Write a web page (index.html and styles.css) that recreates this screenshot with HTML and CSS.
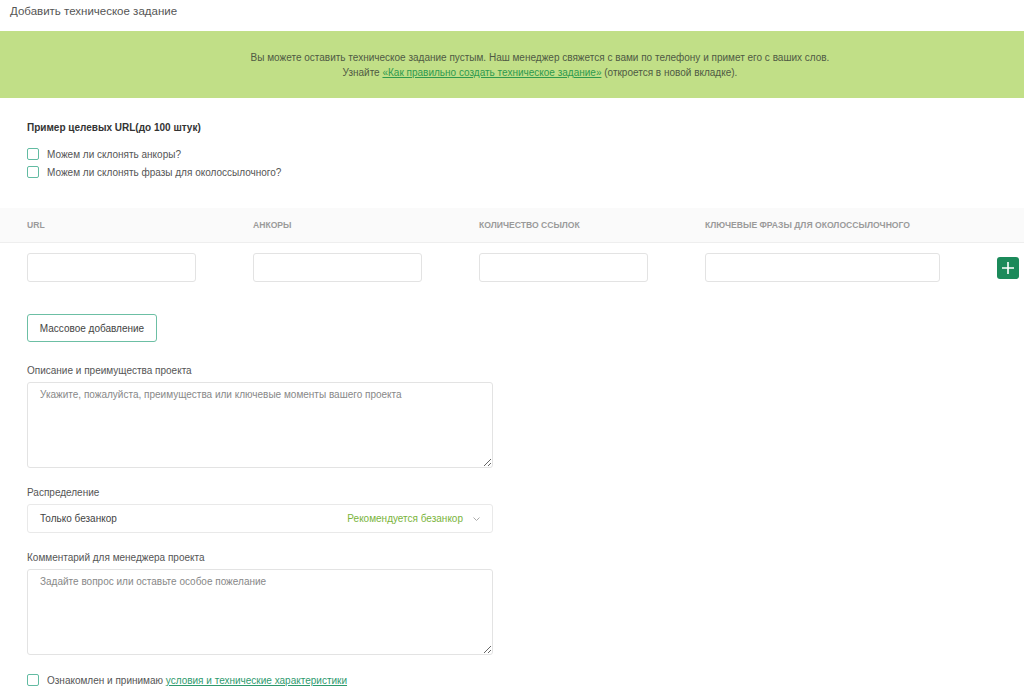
FILE: index.html
```html
<!DOCTYPE html>
<html lang="ru">

<head>
    <meta charset="UTF-8">
    <meta name="viewport" content="width=device-width, initial-scale=1.0">
    <title>Добавить техническое задание</title>
    <link rel="stylesheet" href="styles.css">
</head>

<body>
    <h1 class="title">Добавить техническое задание</h1>

    <div class="notice">
        <p>Вы можете оставить техническое задание пустым. Наш менеджер свяжется с вами по телефону и примет его с ваших слов.</p>
        <p>Узнайте <a href="#">«Как правильно создать техническое задание»</a> (откроется в новой вкладке).</p>
    </div>

    <div class="section">
        <div class="section-title">Пример целевых URL(до 100 штук)</div>
        <label class="check"><span class="box"></span>Можем ли склонять анкоры?</label>
        <label class="check"><span class="box"></span>Можем ли склонять фразы для околоссылочного?</label>
    </div>

    <div class="urls">
        <div class="urls-head">
            <div class="col">URL</div>
            <div class="col">Анкоры</div>
            <div class="col">Количество ссылок</div>
            <div class="col wide">Ключевые фразы для околоссылочного</div>
        </div>
        <div class="urls-row">
            <div class="col"><input type="text" class="field"></div>
            <div class="col"><input type="text" class="field"></div>
            <div class="col"><input type="text" class="field"></div>
            <div class="col wide"><input type="text" class="field"></div>
            <button class="add" type="button">
                <svg width="12" height="12" viewBox="0 0 12 12"><path d="M6 0v12M0 6h12" stroke="#fff" stroke-width="1.6"/></svg>
            </button>
        </div>
    </div>

    <div class="form">
        <button class="mass" type="button">Массовое добавление</button>

        <div class="group first">
            <div class="label">Описание и преимущества проекта</div>
            <textarea class="area" placeholder="Укажите, пожалуйста, преимущества или ключевые моменты вашего проекта"></textarea>
        </div>

        <div class="group">
            <div class="label">Распределение</div>
            <div class="select">
                <span>Только безанкор</span>
                <span class="hint">Рекомендуется безанкор</span>
                <svg class="arrow" width="7" height="4" viewBox="0 0 7 4"><path d="M0.5 0.5l3 3 3-3" fill="none" stroke="#aaa" stroke-width="1"/></svg>
            </div>
        </div>

        <div class="group">
            <div class="label">Комментарий для менеджера проекта</div>
            <textarea class="area" placeholder="Задайте вопрос или оставьте особое пожелание"></textarea>
        </div>

        <label class="check agree"><span class="box"></span>Ознакомлен и принимаю&nbsp;<a href="#">условия и технические характеристики</a></label>
    </div>
</body>

</html>
```

FILE: styles.css
```css
body {
    margin: 0;
    font-family: "Liberation Sans", Arial, sans-serif;
    font-size: 10px;
    color: #555;
    background: #fff;
}

.title {
    margin: 0;
    padding: 4px 10px 0;
    height: 27px;
    font-size: 11.5px;
    line-height: 14px;
    font-weight: normal;
    color: #555;
}

.notice {
    background: #c1df87;
    height: 67px;
    padding: 19px 0 0 56px;
    box-sizing: border-box;
    text-align: center;
    color: #4f5a44;
    font-size: 10px;
    line-height: 15px;
}

.notice p {
    margin: 0;
}

.notice a {
    color: #2e9a4e;
    text-decoration: underline;
}

.section {
    padding: 24px 27px 0;
}

.section-title {
    font-weight: bold;
    color: #333;
    line-height: 12px;
    margin-bottom: 11px;
}

.check {
    display: flex;
    align-items: center;
    height: 18px;
    color: #555;
}

.box {
    box-sizing: border-box;
    width: 12px;
    height: 12px;
    border: 1px solid #62bba2;
    border-radius: 2px;
    margin-right: 8px;
}

.urls {
    margin-top: 27px;
}

.urls-head {
    display: flex;
    align-items: center;
    height: 34px;
    padding-left: 27px;
    background: #fafafa;
    border-bottom: 1px solid #eee;
    font-size: 8.6px;
    font-weight: bold;
    text-transform: uppercase;
    color: #9a9a9a;
}

.col {
    width: 226px;
}

.col.wide {
    width: 292px;
}

.urls-row {
    display: flex;
    align-items: center;
    padding: 10px 0 0 27px;
}

.field {
    box-sizing: border-box;
    width: 169px;
    height: 29px;
    border: 1px solid #e3e3e3;
    border-radius: 3px;
    margin: 0;
}

.wide .field {
    width: 235px;
}

.add {
    width: 22px;
    height: 22px;
    padding: 0;
    border: none;
    border-radius: 3px;
    background: #1b8a5a;
    display: flex;
    align-items: center;
    justify-content: center;
}

.form {
    padding: 32px 27px 0;
}

.mass {
    display: block;
    height: 28px;
    width: 130px;
    padding: 0;
    background: #fff;
    border: 1px solid #6cbfa4;
    border-radius: 3px;
    font-family: inherit;
    font-size: 10px;
    color: #444;
}

.group {
    margin-top: 19px;
}

.group.first {
    margin-top: 23px;
}

.label {
    color: #555;
    line-height: 12px;
    margin-bottom: 5px;
}

.area {
    display: block;
    box-sizing: border-box;
    width: 466px;
    height: 86px;
    border: 1px solid #e3e3e3;
    border-radius: 3px;
    padding: 6px 12px;
    font-family: inherit;
    font-size: 10px;
    color: #444;
    resize: vertical;
}

.area::placeholder {
    color: #888;
}

.select {
    display: flex;
    align-items: center;
    box-sizing: border-box;
    width: 466px;
    height: 29px;
    border: 1px solid #e9e9e9;
    border-radius: 3px;
    padding: 0 12px;
    color: #444;
}

.hint {
    margin-left: auto;
    color: #7ab43c;
}

.arrow {
    margin-left: 10px;
}

.agree {
    margin-top: 16px;
}

.agree a {
    color: #2e9a6e;
    text-decoration: underline;
}
```
